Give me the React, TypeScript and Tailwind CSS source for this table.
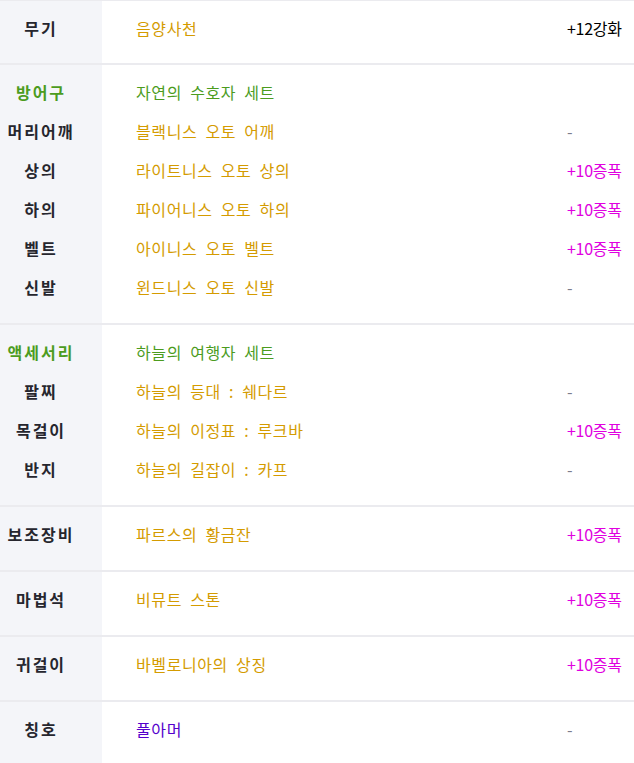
import React from "react";

type Row = {
  label: string;
  value: string;
  tone?: "orange" | "green" | "purple";
  extra?: string;
  labelTone?: "dark" | "green";
};

type Section = Row[];

const sections: Section[] = [
  [{ label: "무기", value: "음양사천", extra: "+12강화" }],
  [
    { label: "방어구", value: "자연의 수호자 세트", tone: "green", labelTone: "green" },
    { label: "머리어깨", value: "블랙니스 오토 어깨", extra: "-" },
    { label: "상의", value: "라이트니스 오토 상의", extra: "+10증폭" },
    { label: "하의", value: "파이어니스 오토 하의", extra: "+10증폭" },
    { label: "벨트", value: "아이니스 오토 벨트", extra: "+10증폭" },
    { label: "신발", value: "윈드니스 오토 신발", extra: "-" },
  ],
  [
    { label: "액세서리", value: "하늘의 여행자 세트", tone: "green", labelTone: "green" },
    { label: "팔찌", value: "하늘의 등대 : 쉐다르", extra: "-" },
    { label: "목걸이", value: "하늘의 이정표 : 루크바", extra: "+10증폭" },
    { label: "반지", value: "하늘의 길잡이 : 카프", extra: "-" },
  ],
  [{ label: "보조장비", value: "파르스의 황금잔", extra: "+10증폭" }],
  [{ label: "마법석", value: "비뮤트 스톤", extra: "+10증폭" }],
  [{ label: "귀걸이", value: "바벨로니아의 상징", extra: "+10증폭" }],
  [{ label: "칭호", value: "풀아머", tone: "purple", extra: "-" }],
];

const valueColor = {
  orange: "text-[#d49b00]",
  green: "text-[#4c9c1e]",
  purple: "text-[#5500cc]",
};

function Extra({ text }: { text?: string }) {
  if (!text) return null;
  if (text === "-") return <span className="text-[#7c7c8c]">-</span>;
  if (text.includes("강화")) return <span className="text-black">{text}</span>;
  return <span className="text-[#e000e0]">{text}</span>;
}

export default function App() {
  return (
    <div
      className="w-[634px] bg-white text-[16px] border-t border-[#ebebef]"
      style={{ fontFamily: '"Noto Sans CJK KR", "Noto Sans", sans-serif' }}
    >
      {sections.map((rows, i) => {
        const pad = i === 0 ? "pt-[7px] pb-[16px]" : "pt-[7px] pb-[17px]";
        return (
          <div
            key={i}
            className={`flex ${i > 0 ? "border-t-2 border-[#ebebef]" : ""}`}
          >
            <div className={`w-[102px] shrink-0 bg-[#f4f5f9] ${pad}`}>
              {rows.map((r) => (
                <div
                  key={r.label}
                  className={`flex h-[39px] w-[82px] items-center justify-center font-bold tracking-[2px] ${
                    r.labelTone === "green" ? "text-[#4c9c1e]" : "text-[#26262e]"
                  }`}
                >
                  {r.label}
                </div>
              ))}
            </div>
            <div className={`flex-1 ${pad}`}>
              {rows.map((r) => (
                <div key={r.label} className="flex h-[39px] items-center">
                  <div
                    className={`flex-1 pl-[34px] tracking-[0.6px] [word-spacing:4px] ${
                      valueColor[r.tone ?? "orange"]
                    }`}
                  >
                    {r.value}
                  </div>
                  <div className="w-[67px] shrink-0 tracking-[-0.3px]">
                    <Extra text={r.extra} />
                  </div>
                </div>
              ))}
            </div>
          </div>
        );
      })}
    </div>
  );
}
